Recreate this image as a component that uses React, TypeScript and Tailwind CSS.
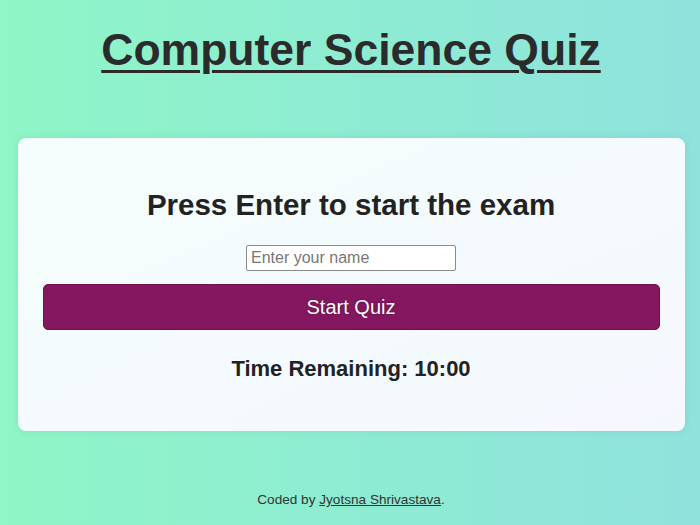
export default function App() {
  return (
    <div
      className="flex min-h-screen flex-col items-center bg-gradient-to-r from-[#8ef6c7] to-[#8fe2dd] pl-[2px] text-[#222]"
      style={{ fontFamily: '"Liberation Sans", Arial, sans-serif' }}
    >
      {/* Title */}
      <h1 className="mt-[25px] text-[44.5px] font-bold leading-[50px] text-[#2b2b2b] underline decoration-[3px] underline-offset-[5px]">
        Computer Science Quiz
      </h1>

      {/* Quiz card */}
      <div className="mt-[63px] flex w-[667px] flex-col items-center rounded-lg bg-gradient-to-br from-[#f4fefc] to-[#f5f7fe] px-[25px] pt-[49px] pb-[49px] shadow-[0_0_8px_rgba(0,0,0,0.08)]">
        <h2 className="text-[29.5px] font-bold leading-[36px] text-[#222]">Press Enter to start the exam</h2>
        <input
          type="text"
          placeholder="Enter your name"
          className="mt-[22px] h-[26px] w-[210px] rounded-[2px] border border-[#8a8a8a] bg-white px-[4px] text-[16px] text-[#222] outline-none placeholder:text-[#777]"
        />
        <button
          type="button"
          className="mt-[13px] h-[46px] w-full rounded-[5px] border border-[#6e0f4e] bg-[#84175f] text-[20px] text-white [text-shadow:0_0_2px_rgba(0,0,0,0.4)]"
        >
          Start Quiz
        </button>
        <p className="mt-[26px] text-[22px] font-bold leading-[26px] text-[#222]">Time Remaining: 10:00</p>
      </div>

      {/* Footer */}
      <footer className="mt-[59px] text-[13.6px] text-[#333]">
        Coded by{" "}
        <a href="#" className="underline">
          Jyotsna Shrivastava
        </a>
        .
      </footer>
    </div>
  );
}
